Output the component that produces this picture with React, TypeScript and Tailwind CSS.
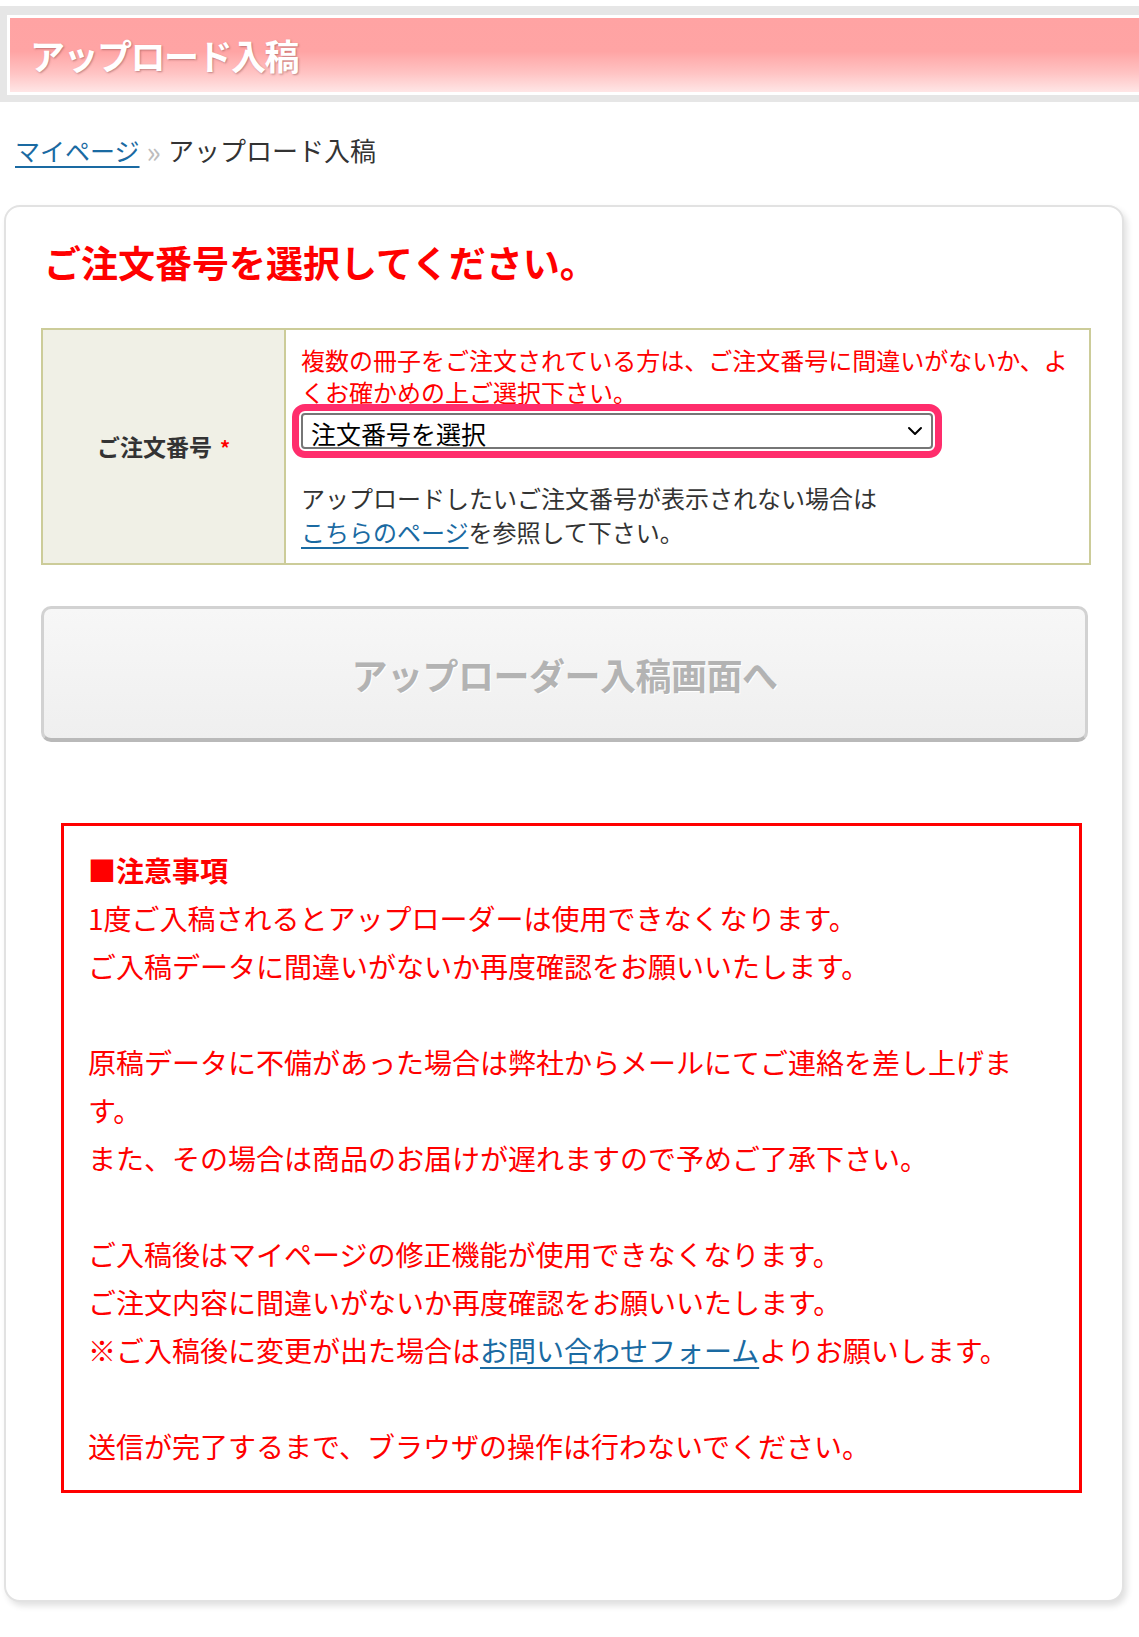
import { ChevronDown } from "lucide-react";

export default function App() {
  return (
    <div className="min-h-screen bg-white pb-[30px] font-['Noto_Sans_CJK_JP','Noto_Sans',sans-serif] text-[#333]">
      {/* Page title banner */}
      <div className="pt-[6px]">
        <div className="bg-[#e6e6e6] pb-[7px] pl-[7px] pt-[9px]">
          <div className="flex h-[80px] items-center border-[3px] border-r-0 border-white bg-[linear-gradient(to_bottom,#ffa3a3_0%,#ffa4a4_45%,#ffc4c4_75%,#ffe6e6_100%)] pl-[20px]">
            <h1 className="text-[35px] font-bold tracking-[-1.5px] text-white [text-shadow:1px_1px_2px_rgba(120,60,60,0.45)]">
              アップロード入稿
            </h1>
          </div>
        </div>
      </div>

      {/* Breadcrumb */}
      <nav className="mt-[32px] flex items-center pl-[15px] text-[25px] leading-[32px]">
        <a href="#" className="text-[#1a6aa2] underline underline-offset-[5px]">
          マイページ
        </a>
        <span className="mx-[7px] text-[30px] leading-none text-[#bdbdbd]">»</span>
        <span className="text-[26px]">アップロード入稿</span>
      </nav>

      {/* Main card */}
      <div className="ml-[4px] mt-[39px] w-[1120px] rounded-[16px] border-2 border-[#e2e2e2] bg-white px-[35px] pb-[107px] pt-[33px] shadow-[3px_4px_6px_rgba(0,0,0,0.12)]">
        <h2 className="pl-[3px] text-[37px] font-bold leading-[44px] tracking-[0px] text-[#ff0000]">
          ご注文番号を選択してください。
        </h2>

        <div className="mt-[44px] grid w-[1050px] grid-cols-[243px_1fr] border-2 border-[#cccc99]">
          <div className="flex items-center justify-center border-r-2 border-[#cccc99] bg-[#f0f0e6]">
            <span className="text-[23px] font-bold text-[#333]">
              ご注文番号<span className="ml-[8px] text-[20px] text-[#ff0000]">*</span>
            </span>
          </div>
          <div className="px-[15px] pb-[14px] pt-[14px]">
            <p className="text-[24px] leading-[32px] text-[#ff0000]">
              複数の冊子をご注文されている方は、ご注文番号に間違いがないか、よくお確かめの上ご選択下さい。
            </p>
            <div className="relative mt-[5px] w-[632px]">
              <select className="h-[36px] w-full appearance-none rounded-[4px] border-2 border-[#767676] bg-white pl-[8px] text-[25px] text-black outline-[7px] outline-offset-[2px] outline-[#ff2d6c] [outline-style:solid]">
                <option>注文番号を選択</option>
              </select>
              <ChevronDown
                className="pointer-events-none absolute right-[6px] top-[6px] h-[24px] w-[24px] text-black"
                strokeWidth={2}
              />
            </div>
            <p className="mt-[32px] text-[24px] leading-[34px] text-[#333]">
              アップロードしたいご注文番号が表示されない場合は
              <br />
              <a href="#" className="text-[#1a6aa2] underline underline-offset-[5px]">
                こちらのページ
              </a>
              を参照して下さい。
            </p>
          </div>
        </div>

        <button
          type="button"
          className="mt-[41px] flex h-[136px] w-[1047px] items-center justify-center rounded-[10px] border-[3px] border-b-[4px] border-[#d2d2d2] border-b-[#b9b9b9] bg-[linear-gradient(to_bottom,#f7f7f7,#efefef)] text-[36px] font-bold tracking-[-0.5px] text-[#b3b3b3] [text-shadow:1px_1px_0_#fff]"
        >
          アップローダー入稿画面へ
        </button>

        <div className="ml-[20px] mt-[81px] w-[1021px] border-[3px] border-[#ff0000] px-[24px] pb-[20px] pt-[20px] text-[28px] leading-[48px] text-[#ff0000]">
          <p className="font-bold">■注意事項</p>
          <p>1度ご入稿されるとアップローダーは使用できなくなります。</p>
          <p>ご入稿データに間違いがないか再度確認をお願いいたします。</p>
          <p>&nbsp;</p>
          <p>原稿データに不備があった場合は弊社からメールにてご連絡を差し上げます。</p>
          <p>また、その場合は商品のお届けが遅れますので予めご了承下さい。</p>
          <p>&nbsp;</p>
          <p>ご入稿後はマイページの修正機能が使用できなくなります。</p>
          <p>ご注文内容に間違いがないか再度確認をお願いいたします。</p>
          <p>
            ※ご入稿後に変更が出た場合は
            <a href="#" className="text-[#1a6aa2] underline underline-offset-[5px]">
              お問い合わせフォーム
            </a>
            よりお願いします。
          </p>
          <p>&nbsp;</p>
          <p>送信が完了するまで、ブラウザの操作は行わないでください。</p>
        </div>
      </div>
    </div>
  );
}
